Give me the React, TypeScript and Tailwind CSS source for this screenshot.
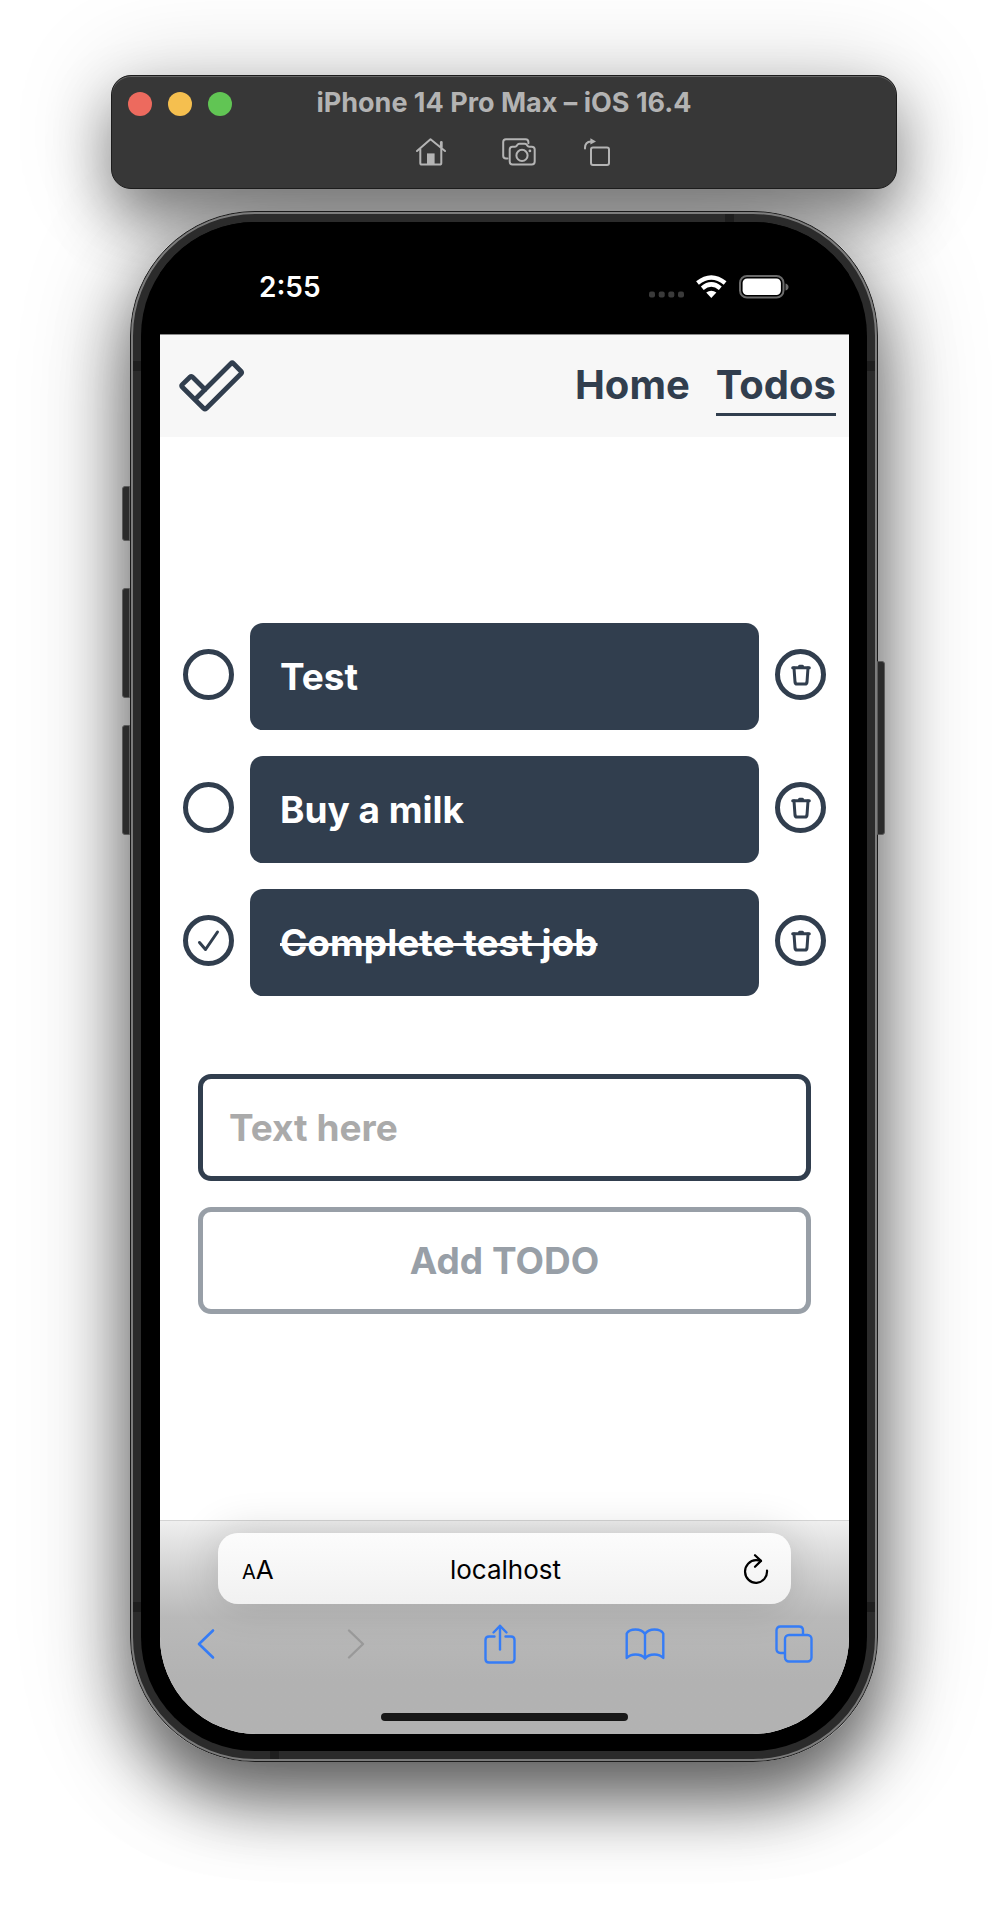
import React, { useState } from "react";

const INK = "#313e4e";

type Todo = { id: number; text: string; done: boolean };

const initialTodos: Todo[] = [
  { id: 1, text: "Test", done: false },
  { id: 2, text: "Buy a milk", done: false },
  { id: 3, text: "Complete test job", done: true },
];

function HomeIcon() {
  return (
    <svg width="30" height="28" viewBox="0 0 30 28" fill="none" stroke="#b4b4b4" strokeWidth="2" strokeLinecap="round" strokeLinejoin="round" aria-hidden="true">
      <path d="M1 13 L14.5 1.2 L29 13" />
      <path d="M4.3 11 V25 Q4.3 26.6 6 26.6 H23.6 Q25.3 26.6 25.3 25 V11" />
      <path d="M25.3 9 V4.5" strokeWidth="2.8" />
      <path d="M11 27 V15.4 H18.6 V27 Z" fill="#b4b4b4" stroke="none" />
    </svg>
  );
}

function ScreenshotIcon() {
  return (
    <svg width="34" height="28" viewBox="0 0 34 28" fill="none" stroke="#b4b4b4" strokeWidth="2" strokeLinecap="round" strokeLinejoin="round" aria-hidden="true">
      <path d="M5.5 20.6 H4 Q1.2 20.6 1.2 17.8 V4 Q1.2 1.2 4 1.2 H23.5 Q26.4 1.2 26.4 4 V5.2" />
      <path d="M10.5 8.7 H13 Q14.2 8.7 15 7.4 L15.8 6.4 Q16.4 5.7 17.6 5.7 H22.6 Q23.8 5.7 24.4 6.4 L25.2 7.4 Q26 8.7 27.2 8.7 H29.7 Q32.7 8.7 32.7 11.6 V23.6 Q32.7 26.6 29.7 26.6 H10.5 Q7.7 26.6 7.7 23.6 V11.6 Q7.7 8.7 10.5 8.7 Z" />
      <circle cx="20" cy="17.4" r="5.6" />
      <circle cx="27.9" cy="12.9" r="1.4" fill="#b4b4b4" stroke="none" />
    </svg>
  );
}

function RotateIcon() {
  return (
    <svg width="26" height="28" viewBox="0 0 26 28" fill="none" stroke="#b4b4b4" strokeWidth="2" strokeLinecap="round" strokeLinejoin="round" aria-hidden="true">
      <rect x="7" y="9.4" width="18" height="17.6" rx="2" />
      <path d="M1 10.5 Q0.8 3.8 7 3.4" />
      <path d="M6.4 0.2 L12 3.4 L6.4 6.6 Z" fill="#b4b4b4" stroke="none" />
    </svg>
  );
}

function TitleBar() {
  return (
    <header className="flex h-[114px] flex-col rounded-[20px] border border-[#1c1c1c] bg-[#373737] shadow-[inset_0_1px_0_#666,0_30px_60px_rgba(0,0,0,0.45),0_0_100px_rgba(0,0,0,0.18)]">
      <div className="grid grid-cols-[1fr_auto_1fr] items-center px-4 pt-[10px]">
        <div className="flex gap-4 pt-[2px]">
          <button aria-label="Close" className="size-6 rounded-full bg-[#ed6a5e]" />
          <button aria-label="Minimize" className="size-6 rounded-full bg-[#f5bf4f]" />
          <button aria-label="Zoom" className="size-6 rounded-full bg-[#61c554]" />
        </div>
        <h1 className="text-[27px] leading-[34px] font-bold whitespace-nowrap text-[#b3b3b3]">iPhone 14 Pro Max – iOS 16.4</h1>
      </div>
      <div className="flex items-center justify-center gap-14 pt-[18px] pl-[18px]">
        <button aria-label="Home"><HomeIcon /></button>
        <button aria-label="Screenshot"><ScreenshotIcon /></button>
        <button aria-label="Rotate" className="-ml-2"><RotateIcon /></button>
      </div>
    </header>
  );
}

function StatusBar() {
  return (
    <div className="flex h-[112px] items-center justify-between bg-black pt-[18px] pr-[59px] pl-[99px]">
      <time className="text-[28px] leading-8 font-semibold text-white">2:55</time>
      <svg width="142" height="24" viewBox="0 0 142 24" role="img" aria-label="Wi-Fi connected, battery full">
        <g fill="#3a3a3a">
          <rect x="1" y="16.500" width="6" height="6" rx="2" />
          <rect x="10.700" y="16.500" width="6" height="6" rx="2" />
          <rect x="20.300" y="16.500" width="6" height="6" rx="2" />
          <rect x="30" y="16.500" width="6" height="6" rx="2" />
        </g>
        <g fill="none" stroke="#fff" strokeWidth="4.4">
          <path d="M49.500 8 Q63.300 -3.200 77.100 8" />
          <path d="M54.300 13.200 Q63.300 5.600 72.300 13.200" />
        </g>
        <path d="M58.200 17.600 Q63.300 13.800 68.400 17.600 L63.300 23 Z" fill="#fff" />
        <rect x="92" y="1" width="43.500" height="21.500" rx="7" fill="none" stroke="#6b6b6b" strokeWidth="2" />
        <rect x="94.600" y="3.500" width="38.300" height="16.500" rx="4.500" fill="#fff" />
        <path d="M137.500 8.500 Q140.500 9.500 140.500 12 Q140.500 14.500 137.500 15.500 Z" fill="#6b6b6b" />
      </svg>
    </div>
  );
}

function Logo() {
  return (
    <svg width="66" height="52" viewBox="0 0 66 52" fill="none" stroke={INK} strokeWidth="4.800" strokeLinejoin="round" aria-hidden="true">
      <path d="M12.500 16.500 Q13 16.500 14 17.500 L26 29.500 L52 3.500 Q53.200 2.300 54.400 3.500 L62 11.200 Q63.200 12.500 62 13.800 L27.200 48.500 Q26 49.600 24.800 48.500 L3.200 27 Q2 25.800 3.200 24.600 L10.800 17.200 Q11.800 16.400 12.500 16.500 Z" />
      <path d="M26 29.500 L16.500 39" />
    </svg>
  );
}

function NavBar() {
  return (
    <nav className="flex h-[103px] items-center justify-between border-t border-[#8a8a8a] bg-[#f7f7f7] pr-[13px] pl-[19px]">
      <a href="#top" aria-label="Todo app"><Logo /></a>
      <div className="flex gap-[26px] text-[40px] leading-[56px] font-bold text-[#313e4e]">
        <a href="#home" className="border-b-[3px] border-transparent">Home</a>
        <a href="#todos" aria-current="page" className="border-b-[3px] border-[#313e4e]">Todos</a>
      </div>
    </nav>
  );
}

function TodoRow({ todo, onToggle, onRemove }: { todo: Todo; onToggle: () => void; onRemove: () => void }) {
  const id = `todo-${todo.id}`;
  return (
    <li className="flex items-center gap-4">
      <span className="relative mb-1 size-[51px] shrink-0">
        <input
          id={id}
          type="checkbox"
          checked={todo.done}
          onChange={onToggle}
          className="block size-full appearance-none rounded-full border-[5px] border-[#313e4e] bg-white"
        />
        {todo.done && (
          <svg className="pointer-events-none absolute inset-0" width="51" height="51" viewBox="0 0 51 51" fill="none" stroke={INK} strokeWidth="3" strokeLinecap="round" strokeLinejoin="round" aria-hidden="true">
            <path d="M16.500 27.500 L22.500 34.500 L34.500 17" />
          </svg>
        )}
      </span>
      <label htmlFor={id} className="flex h-[107px] min-w-0 flex-1 items-center rounded-[13px] bg-[#313e4e] px-[30px] text-[37px] leading-[46px] font-bold text-white">
        <span className={todo.done ? "truncate line-through decoration-[3px]" : "truncate"}>{todo.text}</span>
      </label>
      <button onClick={onRemove} aria-label={`Delete ${todo.text}`} className="mb-1 flex size-[51px] shrink-0 items-center justify-center rounded-full border-[5px] border-[#313e4e]">
        <svg width="20" height="22" viewBox="0 0 20 22" fill="none" stroke={INK} strokeWidth="3" strokeLinecap="round" strokeLinejoin="round" aria-hidden="true">
          <path d="M1.700 3.700 H18.300" />
          <path d="M8.500 2.300 H11.500" />
          <path d="M3 4 L4 18 Q4.200 20 6 20 H14 Q15.800 20 16 18 L17 4" />
        </svg>
      </button>
    </li>
  );
}

function BrowserBar() {
  return (
    <footer className="border-t border-[#d4d4d4] bg-linear-to-b from-[#efefef] via-[#b9b9b9] via-45% to-[#b2b2b2] to-75%">
      <div className="mx-[58px] mt-3 flex h-[71px] items-center justify-between rounded-[20px] bg-linear-to-b from-[#fcfcfc] to-[#f1f1f1] pr-[22px] pl-6 text-black shadow-[0_0_44px_rgba(0,0,0,0.16)]">
        <button aria-label="Page settings" className="flex w-9 items-baseline pt-1 text-[26px] leading-8"><span className="text-[20px]">A</span>A</button>
        <span className="pt-[2px] text-[26px] leading-8">localhost</span>
        <button aria-label="Reload" className="flex w-9 justify-end">
          <svg width="26" height="30" viewBox="0 0 26 30" fill="none" stroke="#000" strokeWidth="2.200" strokeLinecap="round" strokeLinejoin="round" aria-hidden="true">
            <path d="M24 16.500 A11 11.300 0 1 1 13 6.200 Q15.500 6.200 17.800 6.800" />
            <path d="M12 1.200 L18 6.900 L12 12.800" />
          </svg>
        </button>
      </div>
      <div className="flex h-[80px] items-center justify-between px-9 text-[#357cf6]">
        <button aria-label="Back" className="flex w-[20px]">
          <svg width="20" height="32" viewBox="0 0 20 32" fill="none" stroke="currentColor" strokeWidth="2.600" strokeLinecap="round" strokeLinejoin="round" aria-hidden="true">
            <path d="M17 2.500 L3 16 L17 29.500" />
          </svg>
        </button>
        <button aria-label="Forward" disabled className="ml-5 flex w-[20px] text-[#999]">
          <svg width="20" height="32" viewBox="0 0 20 32" fill="none" stroke="currentColor" strokeWidth="2.400" strokeLinecap="round" strokeLinejoin="round" aria-hidden="true">
            <path d="M3 2.500 L17 16 L3 29.500" />
          </svg>
        </button>
        <button aria-label="Share" className="ml-2 flex">
          <svg width="32" height="40" viewBox="0 0 32 40" fill="none" stroke="currentColor" strokeWidth="2.400" strokeLinecap="round" strokeLinejoin="round" aria-hidden="true">
            <path d="M10.500 12.500 H5 Q1.500 12.500 1.500 16 V35 Q1.500 38.500 5 38.500 H27 Q30.500 38.500 30.500 35 V16 Q30.500 12.500 27 12.500 H21.500" />
            <path d="M16 25.500 V2" />
            <path d="M9.500 8.500 L16 1.800 L22.500 8.500" />
          </svg>
        </button>
        <button aria-label="Bookmarks" className="flex">
          <svg width="40" height="34" viewBox="0 0 40 34" fill="none" stroke="currentColor" strokeWidth="2.400" strokeLinejoin="round" aria-hidden="true">
            <path d="M20 7 Q17 2.500 10.500 2.500 Q4 2.500 1.700 6.500 V31 Q5 27.500 10.500 27.500 Q17 27.500 20 31.500 Q23 27.500 29.500 27.500 Q35 27.500 38.300 31 V6.500 Q36 2.500 29.500 2.500 Q23 2.500 20 7 V31" />
          </svg>
        </button>
        <button aria-label="Tabs" className="flex">
          <svg width="38" height="38" viewBox="0 0 38 38" fill="none" stroke="currentColor" strokeWidth="2.400" strokeLinecap="round" strokeLinejoin="round" aria-hidden="true">
            <path d="M9 28 H5.500 Q1.500 28 1.500 24 V5.500 Q1.500 1.500 5.500 1.500 H24 Q28 1.500 28 5.500 V9" />
            <rect x="10" y="10" width="26.500" height="26.500" rx="4" />
          </svg>
        </button>
      </div>
      <div className="flex h-[50px] items-end justify-center pb-[13px]">
        <div className="h-2 w-[247px] rounded-full bg-[#171717]" />
      </div>
    </footer>
  );
}

function Phone({ children }: { children: React.ReactNode }) {
  const key = "absolute w-2 border border-[#5a5a5a] bg-[#2b2b2b]";
  const band = "absolute bg-[#1e1e1e]";
  return (
    <div className="relative mx-[19px] mt-[22px]">
      <div className="absolute inset-0 -z-10 rounded-[125px] shadow-[0_38px_68px_rgba(0,0,0,0.56),0_8px_110px_rgba(0,0,0,0.26)]" />
      <i className={`${key} top-[275px] -left-2 h-[55px] rounded-l-[3px]`} />
      <i className={`${key} top-[377px] -left-2 h-[110px] rounded-l-[3px]`} />
      <i className={`${key} top-[514px] -left-2 h-[110px] rounded-l-[3px]`} />
      <i className={`${key} top-[450px] -right-[7px] h-[174px] rounded-r-[3px]`} />
      <div className="rounded-[125px] border border-[#1a1a1a] bg-[#2b2b2b]">
        <div className="rounded-[124px] border-2 border-[#7c7c7c] p-2">
          <div className="overflow-hidden rounded-[114px] bg-black pr-[18px] pb-[17px] pl-[19px]">{children}</div>
        </div>
      </div>
      <i className={`${band} top-[150px] left-[3px] h-[10px] w-2`} />
      <i className={`${band} top-[150px] right-[3px] h-[10px] w-2`} />
      <i className={`${band} bottom-[150px] left-[3px] h-[10px] w-2`} />
      <i className={`${band} right-[3px] bottom-[150px] h-[10px] w-2`} />
      <i className={`${band} top-[3px] right-[144px] h-2 w-[9px]`} />
      <i className={`${band} bottom-[3px] left-[140px] h-2 w-[9px]`} />
    </div>
  );
}

export default function App() {
  const [todos, setTodos] = useState(initialTodos);
  const [text, setText] = useState("");

  const add = (e: React.FormEvent) => {
    e.preventDefault();
    if (!text.trim()) return;
    setTodos([...todos, { id: Date.now(), text: text.trim(), done: false }]);
    setText("");
  };

  return (
    <div className="isolate overflow-hidden bg-white px-6 pt-[75px] pb-[151px] font-[Inter,'Liberation_Sans',sans-serif]">
      <div className="mx-auto w-full max-w-[786px]">
        <TitleBar />
        <Phone>
          <StatusBar />
          <div className="overflow-hidden rounded-b-[97px] bg-white">
            <NavBar />
            <main className="pt-[186px] pb-[206px]">
              <ul className="flex flex-col gap-[26px] px-[23px]">
                {todos.map((t) => (
                  <TodoRow
                    key={t.id}
                    todo={t}
                    onToggle={() => setTodos(todos.map((x) => (x.id === t.id ? { ...x, done: !x.done } : x)))}
                    onRemove={() => setTodos(todos.filter((x) => x.id !== t.id))}
                  />
                ))}
              </ul>
              <form onSubmit={add} className="mt-[78px] flex flex-col gap-[26px] px-[38px] text-[37px] leading-[46px] font-bold">
                <input
                  type="text"
                  aria-label="New todo"
                  placeholder="Text here"
                  value={text}
                  onChange={(e) => setText(e.target.value)}
                  className="h-[107px] w-full rounded-[13px] border-[5px] border-[#313e4e] bg-white px-[26px] text-[#313e4e] placeholder:text-[#aaaaaa]"
                />
                <button type="submit" disabled={!text.trim()} className="h-[107px] rounded-[13px] border-[5px] border-[#313e4e] text-[#313e4e] disabled:border-[#989fa7] disabled:text-[#989fa7]">
                  Add TODO
                </button>
              </form>
            </main>
            <BrowserBar />
          </div>
        </Phone>
      </div>
    </div>
  );
}
